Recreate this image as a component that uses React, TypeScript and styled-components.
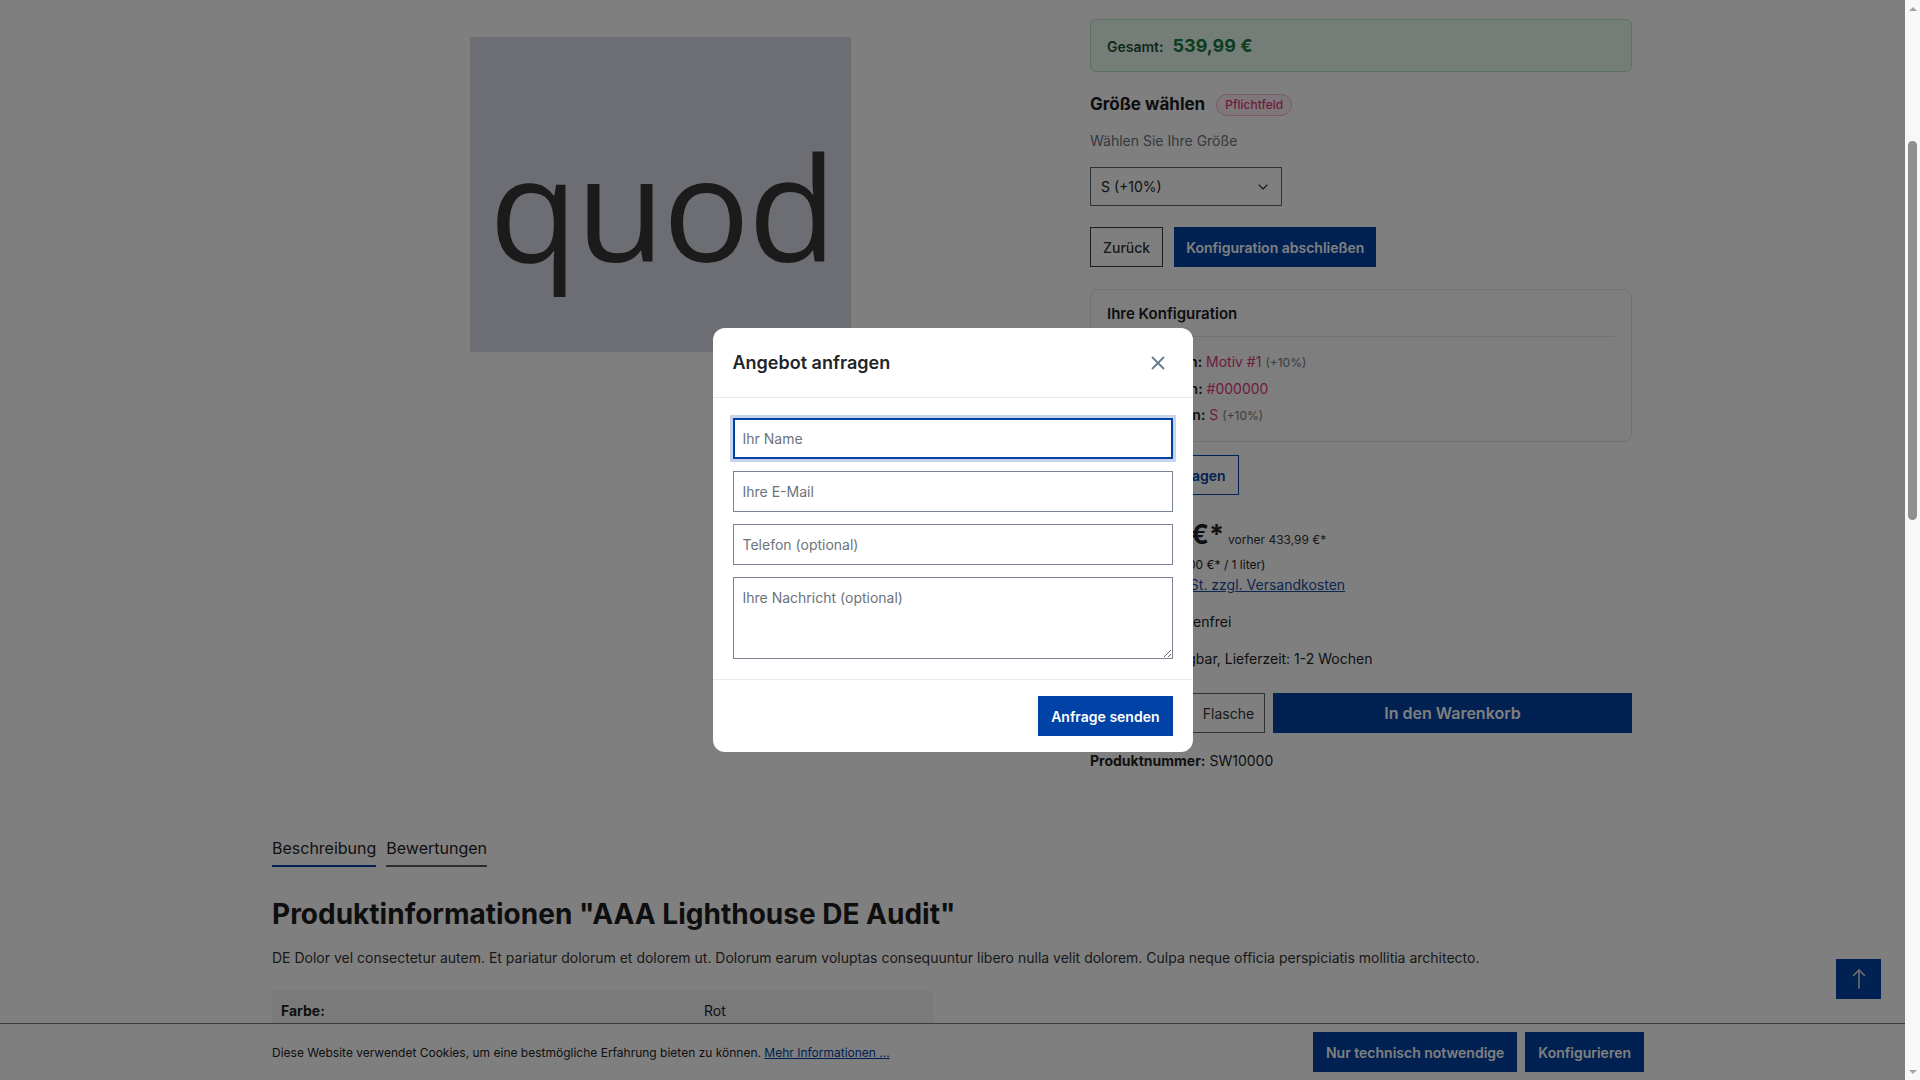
import styled, { createGlobalStyle } from "styled-components";
import { ChevronDown, X } from "lucide-react";

const GlobalStyle = createGlobalStyle`
  html, body {
    margin: 0;
    height: 100%;
    overflow: hidden;
  }
  body {
    font-family: Inter, "Noto Sans", Arial, sans-serif;
    color: #222;
    background: #fff;
  }
  * {
    box-sizing: border-box;
  }
`;

const primary = "#0042a5";

export default function App() {
    return (
        <>
            <GlobalStyle />
            <Shell>
                <Viewport>
                    <Container>
                        <ProductGrid>
                            <Gallery>
                                <Placeholder>quod</Placeholder>
                            </Gallery>
                            <BuyBox>
                                <TotalBox>
                                    <TotalLabel>Gesamt:</TotalLabel>
                                    <TotalValue>539,99 €</TotalValue>
                                </TotalBox>

                                <OptionHead>
                                    <OptionTitle>Größe wählen</OptionTitle>
                                    <RequiredBadge>Pflichtfeld</RequiredBadge>
                                </OptionHead>
                                <OptionHint>Wählen Sie Ihre Größe</OptionHint>
                                <SelectBox>
                                    <span>S (+10%)</span>
                                    <ChevronDown size={16} strokeWidth={1.75} color="#333" />
                                </SelectBox>

                                <ButtonRow>
                                    <GhostButton type="button">Zurück</GhostButton>
                                    <PrimaryButton type="button">Konfiguration abschließen</PrimaryButton>
                                </ButtonRow>

                                <ConfigCard>
                                    <ConfigTitle>Ihre Konfiguration</ConfigTitle>
                                    <ConfigList>
                                        <ConfigRow>
                                            <ConfigLabel>Motiv wählen:</ConfigLabel> <ConfigValue>Motiv #1</ConfigValue> <ConfigExtra>(+10%)</ConfigExtra>
                                        </ConfigRow>
                                        <ConfigRow>
                                            <ConfigLabel>Farbe wählen:</ConfigLabel> <ConfigValue>#000000</ConfigValue>
                                        </ConfigRow>
                                        <ConfigRow>
                                            <ConfigLabel>Größe wählen:</ConfigLabel> <ConfigValue>S</ConfigValue> <ConfigExtra>(+10%)</ConfigExtra>
                                        </ConfigRow>
                                    </ConfigList>
                                </ConfigCard>

                                <OutlineButton type="button">Angebot anfragen</OutlineButton>

                                <PriceLine>
                                    <Price>476,99 €*</Price>
                                    <OldPrice>vorher 433,99 €*</OldPrice>
                                </PriceLine>
                                <UnitPrice>Inhalt: 1 liter (100,00 €* / 1 liter)</UnitPrice>
                                <TaxLink href="#">Preise inkl. MwSt. zzgl. Versandkosten</TaxLink>
                                <ShippingNote>Versandkostenfrei</ShippingNote>
                                <DeliveryNote>Sofort verfügbar, Lieferzeit: 1-2 Wochen</DeliveryNote>

                                <BuyRow>
                                    <QtySelect>
                                        <ChevronDown size={16} strokeWidth={1.75} color="#333" />
                                    </QtySelect>
                                    <UnitAddon>Flasche</UnitAddon>
                                    <CartButton type="button">In den Warenkorb</CartButton>
                                </BuyRow>
                                <ProductNumber>
                                    <strong>Produktnummer:</strong> SW10000
                                </ProductNumber>
                            </BuyBox>
                        </ProductGrid>

                        <TabList>
                            <Tab $active>Beschreibung</Tab>
                            <Tab>Bewertungen</Tab>
                        </TabList>
                        <DescTitle>Produktinformationen "AAA Lighthouse DE Audit"</DescTitle>
                        <DescText>
                            DE Dolor vel consectetur autem. Et pariatur dolorum et dolorem ut. Dolorum earum voluptas consequuntur libero nulla velit dolorem. Culpa neque officia perspiciatis mollitia
                            architecto.
                        </DescText>
                        <PropTable>
                            <PropRow>
                                <PropKey>Farbe:</PropKey>
                                <span>Rot</span>
                            </PropRow>
                        </PropTable>
                    </Container>

                    <BackToTop type="button" aria-label="Nach oben">
                        <svg width="24" height="24" viewBox="0 0 24 24" fill="none" stroke="#e6e6e6" strokeWidth="1.5" strokeLinecap="round">
                            <path d="M12 3v18" />
                            <path d="M6.5 8.5 12 3l5.5 5.5" />
                        </svg>
                    </BackToTop>

                    <CookieBar>
                        <CookieText>
                            Diese Website verwendet Cookies, um eine bestmögliche Erfahrung bieten zu können. <a href="#">Mehr Informationen ...</a>
                        </CookieText>
                        <CookieActions>
                            <CookieButton type="button">Nur technisch notwendige</CookieButton>
                            <CookieButton type="button">Konfigurieren</CookieButton>
                        </CookieActions>
                    </CookieBar>

                    <Backdrop>
                        <Modal role="dialog" aria-modal="true">
                            <ModalHeader>
                                <ModalTitle>Angebot anfragen</ModalTitle>
                                <CloseButton type="button" aria-label="Schließen">
                                    <X size={22} strokeWidth={2} color="#6b7a90" />
                                </CloseButton>
                            </ModalHeader>
                            <ModalBody>
                                <Field $focused placeholder="Ihr Name" />
                                <Field placeholder="Ihre E-Mail" />
                                <Field placeholder="Telefon (optional)" />
                                <MessageField placeholder="Ihre Nachricht (optional)" />
                            </ModalBody>
                            <ModalFooter>
                                <SubmitButton type="button">Anfrage senden</SubmitButton>
                            </ModalFooter>
                        </Modal>
                    </Backdrop>
                </Viewport>

                <ScrollRail>
                    <ScrollArrow />
                    <ScrollTrack>
                        <ScrollThumb />
                    </ScrollTrack>
                    <ScrollArrow $down />
                </ScrollRail>
            </Shell>
        </>
    );
}

const Shell = styled.div`
    display: flex;
    width: 100vw;
    height: 100vh;
`;

const Viewport = styled.div`
    position: relative;
    flex: 1;
    overflow: hidden;
    padding-right: 1px;
    background: #fff;
`;

const Container = styled.div`
    max-width: 1360px;
    margin: 0 auto;
`;

const ProductGrid = styled.div`
    display: grid;
    grid-template-columns: 1fr 542px;
    column-gap: 40px;
    padding-top: 19px;
`;

const Gallery = styled.div`
    display: flex;
    justify-content: center;
    align-items: flex-start;
    padding: 18px 2px 0 0;
`;

const Placeholder = styled.div`
    width: 381px;
    height: 315px;
    background: #dadce6;
    color: #363636;
    font-family: "Open Sans", "Noto Sans", sans-serif;
    font-size: 145px;
    line-height: 1;
    letter-spacing: -2px;
    text-align: center;
    padding: 96px 0 0 4px;
`;

const BuyBox = styled.div`
    display: flex;
    flex-direction: column;
    font-size: 14px;
    line-height: 21px;
`;

const TotalBox = styled.div`
    display: flex;
    align-items: baseline;
    gap: 9px;
    height: 53px;
    padding: 15px 16px 0;
    border: 1px solid #b6e3c3;
    border-radius: 6px;
    background: #ebfbf0;
`;

const TotalLabel = styled.span`
    font-size: 14px;
    font-weight: 600;
    color: #1e5130;
`;

const TotalValue = styled.span`
    font-size: 18px;
    font-weight: 700;
    color: #177a3f;
`;

const OptionHead = styled.div`
    display: flex;
    align-items: center;
    gap: 11px;
    height: 27px;
    margin-top: 19px;
`;

const OptionTitle = styled.span`
    font-size: 17px;
    font-weight: 700;
    color: #1b1b1f;
`;

const RequiredBadge = styled.span`
    height: 22px;
    padding: 0 8px;
    border: 1px solid #f2b5cb;
    border-radius: 999px;
    background: #fdf1f6;
    color: #e0397a;
    font-size: 12px;
    font-weight: 500;
    line-height: 20px;
`;

const OptionHint = styled.div`
    margin-top: 12px;
    color: #6c737d;
`;

const SelectBox = styled.div`
    display: flex;
    align-items: center;
    justify-content: space-between;
    width: 192px;
    height: 39px;
    margin-top: 16px;
    padding: 0 10px;
    border: 1px solid #5c6370;
    background: #fff;
`;

const ButtonRow = styled.div`
    display: flex;
    gap: 11px;
    margin-top: 21px;
`;

const GhostButton = styled.button`
    height: 40px;
    padding: 0 12px;
    border: 1px solid #3c3c3c;
    background: #fff;
    color: #333;
    font: inherit;
    font-weight: 500;
`;

const PrimaryButton = styled.button`
    height: 40px;
    padding: 0 12px;
    border: none;
    background: ${primary};
    color: #fff;
    font: inherit;
    font-weight: 600;
`;

const ConfigCard = styled.div`
    margin-top: 22px;
    padding: 13px 16px 15px;
    border: 1px solid #e4e4e4;
    border-radius: 8px;
    background: #fcfcfc;
`;

const ConfigTitle = styled.div`
    padding-bottom: 11px;
    margin-bottom: 14px;
    border-bottom: 1px solid #e2e2e2;
    font-size: 15px;
    font-weight: 600;
    line-height: 22px;
    color: #1b1b1f;
`;

const ConfigList = styled.div`
    display: flex;
    flex-direction: column;
    gap: 5px;
`;

const ConfigRow = styled.div`
    line-height: 21px;
`;

const ConfigLabel = styled.span`
    font-weight: 600;
`;

const ConfigValue = styled.span`
    color: #e0397a;
`;

const ConfigExtra = styled.span`
    font-size: 12px;
    color: #7a7a7a;
`;

const OutlineButton = styled.button`
    align-self: flex-start;
    height: 40px;
    margin-top: 13px;
    padding: 0 12px;
    border: 1px solid ${primary};
    background: #fff;
    color: ${primary};
    font: inherit;
    font-weight: 600;
`;

const PriceLine = styled.div`
    display: flex;
    align-items: baseline;
    gap: 4px;
    margin-top: 23px;
`;

const Price = styled.span`
    font-size: 27px;
    font-weight: 700;
    line-height: 34px;
`;

const OldPrice = styled.span`
    font-size: 12px;
    color: #333;
`;

const UnitPrice = styled.div`
    margin-top: 4px;
    font-size: 12px;
    line-height: 18px;
`;

const TaxLink = styled.a`
    align-self: flex-start;
    color: #1d4f9c;
    text-decoration: underline;
`;

const ShippingNote = styled.div`
    margin-top: 16px;
    padding-left: 21px;
    font-size: 14px;
`;

const DeliveryNote = styled.div`
    margin-top: 16px;
    padding-left: 18px;
    font-size: 14px;
    line-height: 22px;
`;

const BuyRow = styled.div`
    display: flex;
    height: 40px;
    margin-top: 23px;
`;

const QtySelect = styled.div`
    display: flex;
    align-items: center;
    justify-content: flex-end;
    width: 103px;
    padding: 0 10px;
    border: 1px solid #5c6370;
`;

const UnitAddon = styled.div`
    display: flex;
    align-items: center;
    justify-content: center;
    width: 72px;
    border: 1px solid #5c6370;
    border-left: none;
    background: #fff;
    color: #333;
`;

const CartButton = styled.button`
    flex: 1;
    margin-left: 8px;
    border: none;
    background: ${primary};
    color: #fff;
    font: inherit;
    font-size: 16px;
    font-weight: 600;
`;

const ProductNumber = styled.div`
    margin-top: 17px;
`;

const TabList = styled.div`
    display: flex;
    gap: 10px;
    margin-top: 65px;
`;

const Tab = styled.div<{ $active?: boolean }>`
    padding-bottom: 5px;
    border-bottom: 2px solid ${({ $active }) => ($active ? primary : "#595959")};
    font-size: 16px;
    line-height: 24px;
    color: #222;
`;

const DescTitle = styled.h2`
    margin: 30px 0 0;
    font-size: 28px;
    font-weight: 700;
    line-height: 34px;
    color: #1c1c1c;
`;

const DescText = styled.p`
    margin: 16px 0 0;
    font-size: 14px;
    line-height: 21px;
    color: #333;
`;

const PropTable = styled.div`
    width: 661px;
    margin-top: 23px;
    padding-bottom: 20px;
    background: #f4f4f4;
`;

const PropRow = styled.div`
    display: grid;
    grid-template-columns: 423px 1fr;
    padding: 9px;
    font-size: 14px;
    line-height: 21px;
`;

const PropKey = styled.span`
    font-weight: 700;
`;

const BackToTop = styled.button`
    position: absolute;
    right: 24px;
    bottom: 81px;
    display: flex;
    align-items: center;
    justify-content: center;
    width: 45px;
    height: 40px;
    padding: 0;
    border: none;
    background: ${primary};
`;

const CookieBar = styled.div`
    position: absolute;
    left: 0;
    right: 0;
    bottom: 0;
    display: flex;
    align-items: center;
    justify-content: space-between;
    height: 57px;
    padding: 0 261px 0 272px;
    border-top: 1px solid #777;
    background: #fff;
`;

const CookieText = styled.div`
    font-size: 12px;
    color: #222;

    a {
        color: ${primary};
        text-decoration: underline;
    }
`;

const CookieActions = styled.div`
    display: flex;
    gap: 8px;
`;

const CookieButton = styled.button`
    height: 40px;
    padding: 0 13px;
    border: none;
    background: ${primary};
    color: #fff;
    font: inherit;
    font-size: 14px;
    font-weight: 600;
`;

const Backdrop = styled.div`
    position: absolute;
    inset: 0;
    z-index: 10;
    display: flex;
    align-items: center;
    justify-content: center;
    background: rgba(0, 0, 0, 0.5);
`;

const Modal = styled.div`
    width: 480px;
    border-radius: 12px;
    background: #fff;
    overflow: hidden;
`;

const ModalHeader = styled.div`
    display: flex;
    align-items: center;
    justify-content: space-between;
    height: 70px;
    padding: 0 24px 0 20px;
    border-bottom: 1px solid #e7e9ec;
`;

const ModalTitle = styled.h5`
    margin: 0;
    font-size: 18px;
    font-weight: 600;
    color: #212529;
`;

const CloseButton = styled.button`
    display: flex;
    padding: 0;
    border: none;
    background: none;
`;

const ModalBody = styled.div`
    display: flex;
    flex-direction: column;
    gap: 12px;
    padding: 20px;
    border-bottom: 1px solid #e7e9ec;
`;

const Field = styled.input<{ $focused?: boolean }>`
    height: 41px;
    padding: 0 9px;
    border: 1px solid ${({ $focused }) => ($focused ? primary : "#7b8494")};
    box-shadow: ${({ $focused }) => ($focused ? `inset 0 0 0 1px ${primary}, 0 0 0 3px #c6d4ee` : "none")};
    background: #fff;
    color: #212529;
    font: inherit;
    font-size: 14px;
    outline: none;

    &::placeholder {
        color: #6c737d;
    }
`;

const MessageField = styled.textarea`
    height: 82px;
    padding: 9px;
    border: 1px solid #7b8494;
    background: #fff;
    color: #212529;
    font: inherit;
    font-size: 14px;
    line-height: 21px;
    resize: vertical;
    outline: none;

    &::placeholder {
        color: #6c737d;
    }
`;

const ModalFooter = styled.div`
    display: flex;
    justify-content: flex-end;
    padding: 16px 20px;
`;

const SubmitButton = styled.button`
    height: 40px;
    padding: 0 13px;
    border: none;
    background: ${primary};
    color: #fff;
    font: inherit;
    font-size: 14px;
    font-weight: 600;
`;

const ScrollRail = styled.div`
    display: flex;
    flex-direction: column;
    align-items: center;
    width: 15px;
    background: #f8f8f8;
`;

const ScrollArrow = styled.div<{ $down?: boolean }>`
    display: flex;
    align-items: center;
    justify-content: center;
    height: 17px;

    &::before {
        content: "";
        border-left: 4px solid transparent;
        border-right: 4px solid transparent;
        ${({ $down }) => ($down ? "border-top: 4px solid #a3a3a3;" : "border-bottom: 4px solid #a3a3a3;")}
    }
`;

const ScrollTrack = styled.div`
    flex: 1;
    display: flex;
    flex-direction: column;
    align-items: center;
`;

const ScrollThumb = styled.div`
    width: 9px;
    height: 379px;
    margin-top: 124px;
    border-radius: 5px;
    background: #8f8f8f;
`;
